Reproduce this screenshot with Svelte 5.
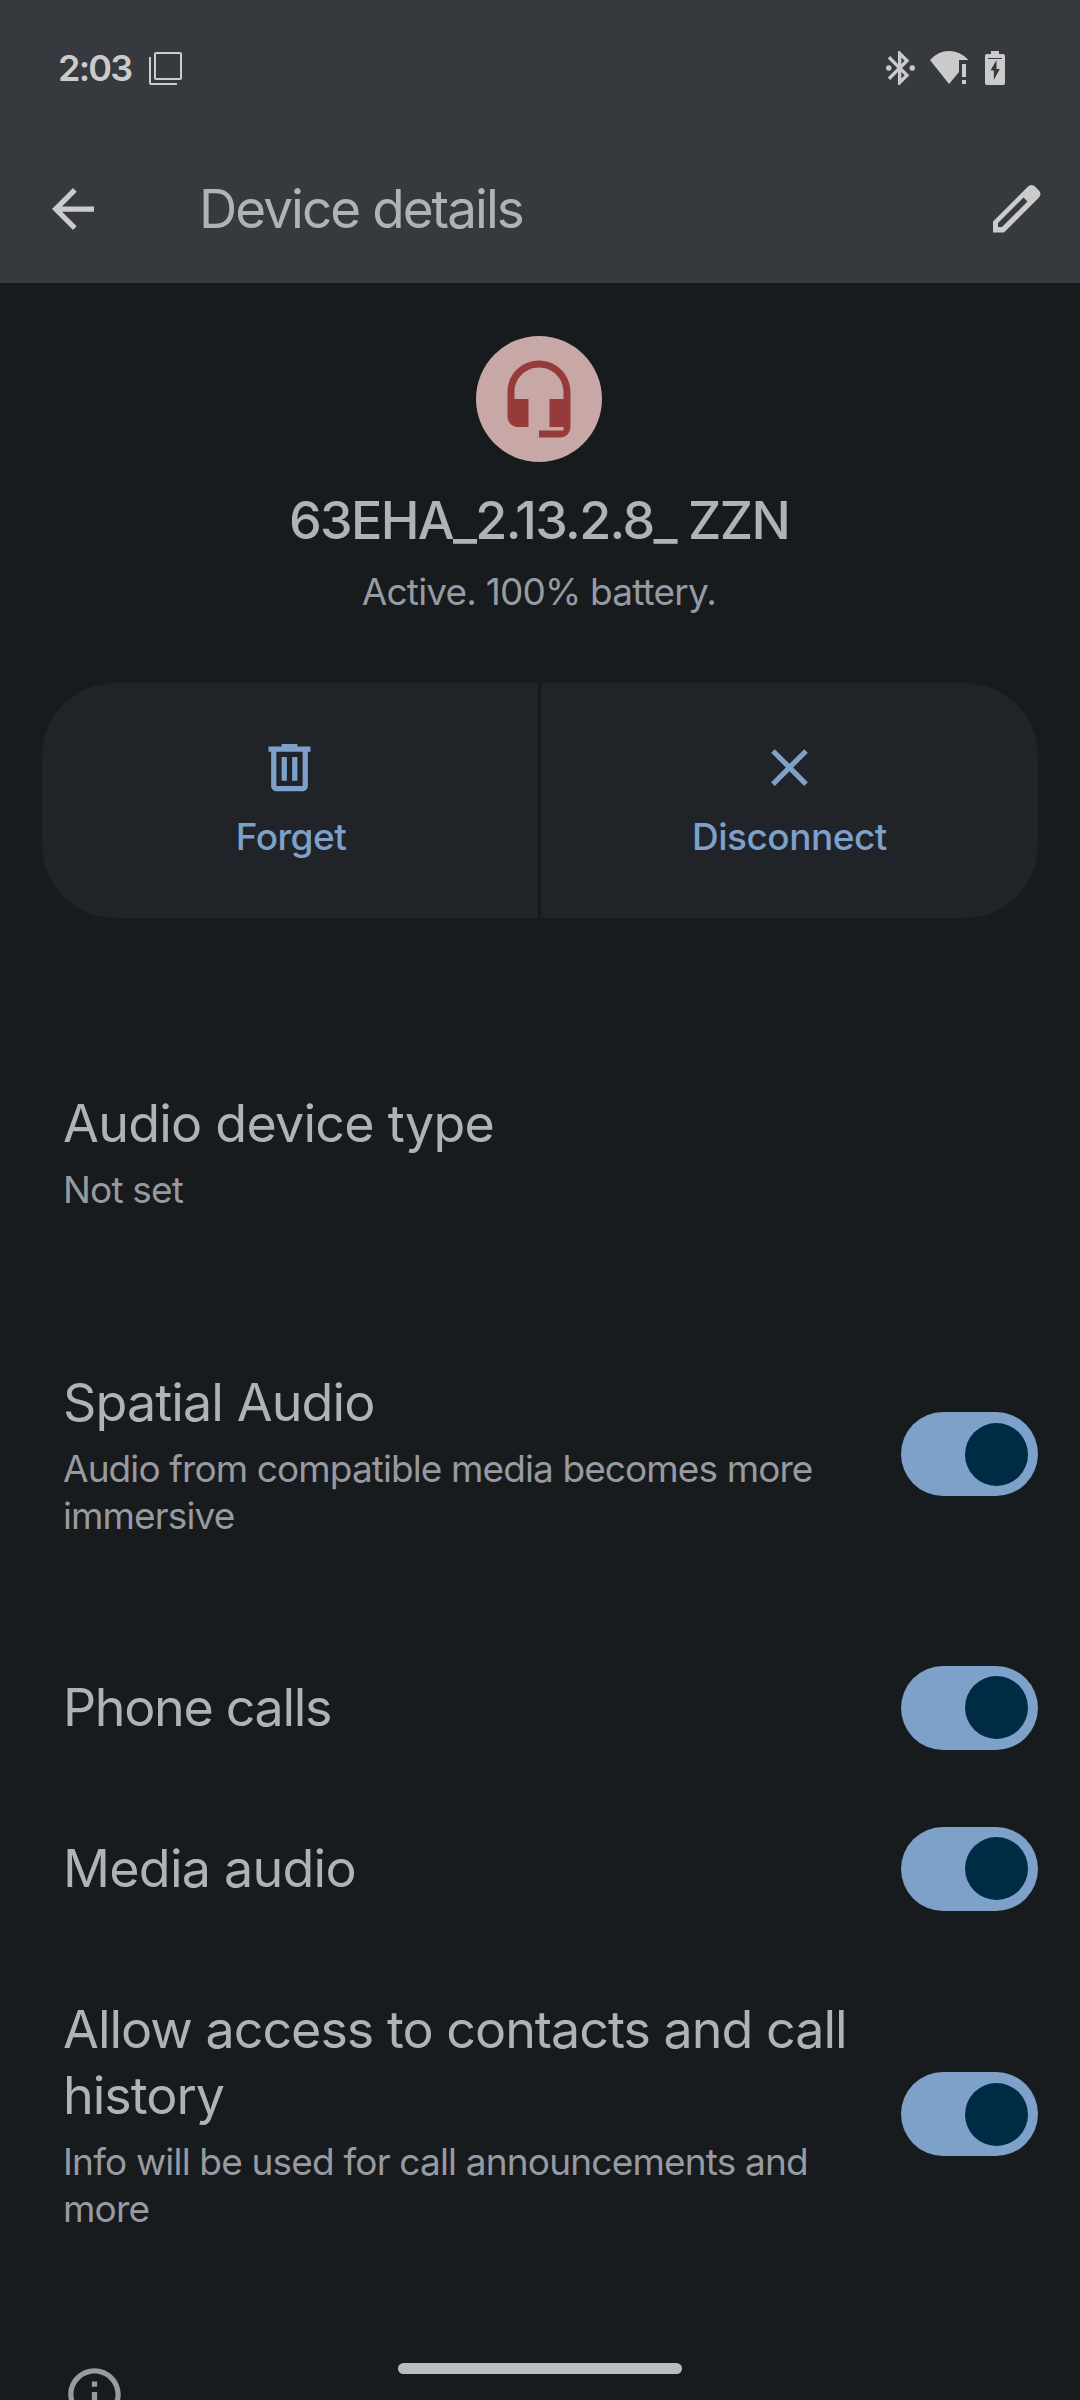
<script>
	let settings = [
		{ id: "type", title: "Audio device type", summary: "Not set" },
		{ id: "spatial", title: "Spatial Audio", summary: "Audio from compatible media becomes more immersive", on: true },
		{ id: "calls", title: "Phone calls", on: true },
		{ id: "media", title: "Media audio", on: true },
		{ id: "contacts", title: "Allow access to contacts and call history", summary: "Info will be used for call announcements and more", on: true },
	];

	const toggle = (s) => {
		s.on = !s.on;
		settings = settings;
	}
</script>

<div class="screen">
	<header>
		<div class="statusbar">
			<span class="clock">2:03</span>
			<svg class="shots" viewBox="0 0 33 33" fill="none" stroke="currentColor" stroke-width="2">
				<rect x="6" y="1" width="26" height="26" rx="1" />
				<path d="M1 5v26q0 1 1 1h26" />
			</svg>
			<div class="status_icons">
				<svg width="29" height="34" viewBox="4 2 17 20" fill="currentColor">
					<path fill-rule="evenodd" d="M17.710 7.710L12 2h-1v7.590L6.410 5 5 6.410 10.590 12 5 17.590 6.410 19 11 14.410V22h1l5.710-5.710L13.410 12zM13 5.830l1.880 1.880L13 9.590zM14.880 16.290L13 18.170v-3.760z" />
					<circle cx="5.600" cy="12" r="1.600" />
					<circle cx="19.400" cy="12" r="1.600" />
				</svg>
				<svg class="wifi" width="39" height="34" viewBox="0 0 39 34" fill="currentColor">
					<path d="M0 9Q8 0 19 0T38.500 9H29v12L19 33z" />
					<path d="M32 13h4v13h-4zM32 29h4v4h-4z" />
				</svg>
				<svg class="battery" width="20" height="34" viewBox="0 0 20 34" fill="currentColor">
					<path fill-rule="evenodd" d="M6 0h8v3h4q2 0 2 2v27q0 2-2 2H2q-2 0-2-2V5q0-2 2-2h4zM3 7v1h14V7zM11.500 9L5.500 19.500h3.300V29l6-11h-3.300z" />
				</svg>
			</div>
		</div>
		<div class="toolbar">
			<button class="icon_button" aria-label="Back">
				<svg width="42" height="42" viewBox="4 4 16 16" fill="currentColor"><path d="M20 11H7.830l5.590-5.590L12 4l-8 8 8 8 1.410-1.410L7.830 13H20z" /></svg>
			</button>
			<h1>Device details</h1>
			<button class="icon_button" aria-label="Edit">
				<svg width="48" height="48" viewBox="0 0 48 48">
					<path fill="currentColor" fill-rule="evenodd" d="M0 36.500L34.500 2Q38.500-2 42.500 2L45.500 5Q49.500 9 45.500 13L11 47.500H0zM5 38L30.500 12.500L34.500 16.500L9 42H5z" />
				</svg>
			</button>
		</div>
	</header>

	<section class="device">
		<div class="avatar">
			<svg width="84" height="84" viewBox="0 0 24 24" fill="currentColor"><path d="M12 1c-4.970 0-9 4.030-9 9v7c0 1.660 1.340 3 3 3h3v-8H5v-2c0-3.870 3.130-7 7-7s7 3.130 7 7v2h-4v8h4v1h-7v2h6c1.660 0 3-1.340 3-3V10c0-4.970-4.030-9-9-9z" /></svg>
		</div>
		<h2>63EHA_2.13.2.8_ ZZN</h2>
		<p>Active. 100% battery.</p>
	</section>

	<div class="actions">
		<button class="forget">
			<svg width="63" height="63" viewBox="0 0 24 24" fill="currentColor"><path fill-rule="evenodd" d="M15 4V3H9v1H4v2h1v13c0 1.100.9 2 2 2h10c1.100 0 2-.9 2-2V6h1V4zM17 19H7V6h10zM9 8h2v9H9zM13 8h2v9h-2z" /></svg>
			<span>Forget</span>
		</button>
		<button>
			<svg width="63" height="63" viewBox="0 0 24 24" fill="currentColor"><path d="M19 6.410L17.590 5 12 10.590 6.410 5 5 6.410 10.590 12 5 17.590 6.410 19 12 13.410 17.590 19 19 17.590 13.410 12z" /></svg>
			<span>Disconnect</span>
		</button>
	</div>

	<ul class="settings">
		{#each settings as s (s.id)}
			<li class={s.id}>
				<div class="text">
					<h3>{s.title}</h3>
					{#if s.summary}
						<p>{s.summary}</p>
					{/if}
				</div>
				{#if s.on !== undefined}
					<button class="switch" class:on={s.on} role="switch" aria-checked={s.on} aria-label={s.title} on:click={() => toggle(s)}>
						<span class="thumb"></span>
					</button>
				{/if}
			</li>
		{/each}
	</ul>

	<svg class="info" width="63" height="63" viewBox="0 0 24 24" fill="currentColor"><path d="M11 7h2v2h-2zm0 4h2v6h-2zm1-9C6.480 2 2 6.480 2 12s4.480 10 10 10 10-4.480 10-10S17.520 2 12 2zm0 18c-4.410 0-8-3.590-8-8s3.590-8 8-8 8 3.590 8 8-3.590 8-8 8z" /></svg>

	<div class="navhandle"></div>
</div>

<style>
	:global(body) {
		margin: 0;
		background: #171b1e;
	}

	.screen {
		position: relative;
		width: 1080px;
		height: 2400px;
		overflow: hidden;
		background: #171b1e;
		color: #b1b2b7;
		font-family: Inter, Roboto, sans-serif;
	}

	h1, h2, h3, p, ul {
		margin: 0;
		padding: 0;
		font-weight: 400;
	}

	button {
		border: none;
		padding: 0;
		background: none;
		color: inherit;
		font-family: inherit;
		cursor: pointer;
	}

	svg {
		display: block;
		flex: none;
	}

	header {
		height: 283px;
		background: #36393e;
	}

	.statusbar {
		display: flex;
		align-items: center;
		height: 136px;
		padding: 0 75px 0 58px;
		color: #cbcbcb;
	}

	.clock {
		width: 91px;
		font-size: 36px;
		font-weight: 600;
		letter-spacing: -1.8px;
	}

	.shots {
		width: 33px;
		height: 33px;
	}

	.status_icons {
		display: flex;
		margin-left: auto;
	}

	.wifi {
		margin-left: 15px;
	}

	.battery {
		margin-left: 16px;
	}

	.toolbar {
		display: flex;
		align-items: center;
		height: 147px;
		padding: 0 39px 2px 52px;
		box-sizing: border-box;
	}

	.icon_button {
		color: #cbcbcb;
	}

	h1 {
		flex: 1;
		padding-left: 105px;
		font-size: 53px;
		line-height: 66px;
		letter-spacing: -1.95px;
	}

	.device {
		display: flex;
		flex-direction: column;
		align-items: center;
		padding-top: 53px;
		padding-right: 2px;
	}

	.avatar {
		display: flex;
		align-items: center;
		justify-content: center;
		width: 126px;
		height: 126px;
		border-radius: 50%;
		background: #c7a8a6;
		color: #973a3a;
	}

	h2 {
		margin-top: 26px;
		font-size: 52px;
		font-weight: 550;
		line-height: 66px;
		letter-spacing: -1.65px;
	}

	p {
		color: #979aa0;
		font-size: 37px;
		line-height: 47px;
		letter-spacing: -0.82px;
	}

	.device p {
		margin-top: 14px;
	}

	.actions {
		display: grid;
		grid-template-columns: 496px 497px;
		gap: 3px;
		height: 235px;
		margin: 68px 42px 0;
		border-radius: 73px;
		overflow: hidden;
	}

	.actions button {
		display: flex;
		flex-direction: column;
		align-items: center;
		padding-top: 53px;
		background: #202328;
		color: #7da1c9;
		font-size: 37px;
		font-weight: 500;
		line-height: 47px;
		letter-spacing: -0.5px;
	}

	.actions .forget svg {
		margin-right: 2px;
	}

	.actions span {
		margin-top: 14px;
	}

	.actions .forget span {
		margin-left: 2px;
	}

	.settings {
		margin-top: 125px;
		list-style: none;
	}

	li {
		display: flex;
		align-items: center;
		padding: 47px 42px 47px 63px;
	}

	li.type {
		margin-bottom: 62px;
	}

	li.spatial {
		margin-bottom: 41px;
	}

	.text {
		flex: 1;
		padding-right: 42px;
	}

	h3 {
		padding-top: 1px;
		font-size: 52px;
		line-height: 66px;
		letter-spacing: -0.75px;
	}

	.spatial h3 {
		letter-spacing: -0.9px;
	}

	.spatial p {
		letter-spacing: -0.9px;
	}

	.calls h3 {
		letter-spacing: -1.35px;
	}

	.contacts h3 {
		letter-spacing: -1px;
	}

	h3 + p {
		margin-top: 9px;
	}

	/* taller than a one-line row, so it must not stretch it */
	.switch {
		flex: none;
		width: 137px;
		height: 84px;
		margin: -10px 0;
		padding: 0 10.500px;
		border-radius: 42px;
		background: #44474c;
	}

	.calls, .media {
		height: 67px;
	}

	.switch.on {
		background: #7da1c9;
	}

	.thumb {
		display: block;
		width: 63px;
		height: 63px;
		border-radius: 50%;
		background: #002b45;
	}

	.switch.on .thumb {
		margin-left: auto;
	}

	.info {
		margin: 84px 0 0 63px;
		color: #979aa0;
	}

	.navhandle {
		position: absolute;
		left: 398px;
		bottom: 26px;
		width: 284px;
		height: 11px;
		border-radius: 6px;
		background: #bcbcbc;
	}
</style>
